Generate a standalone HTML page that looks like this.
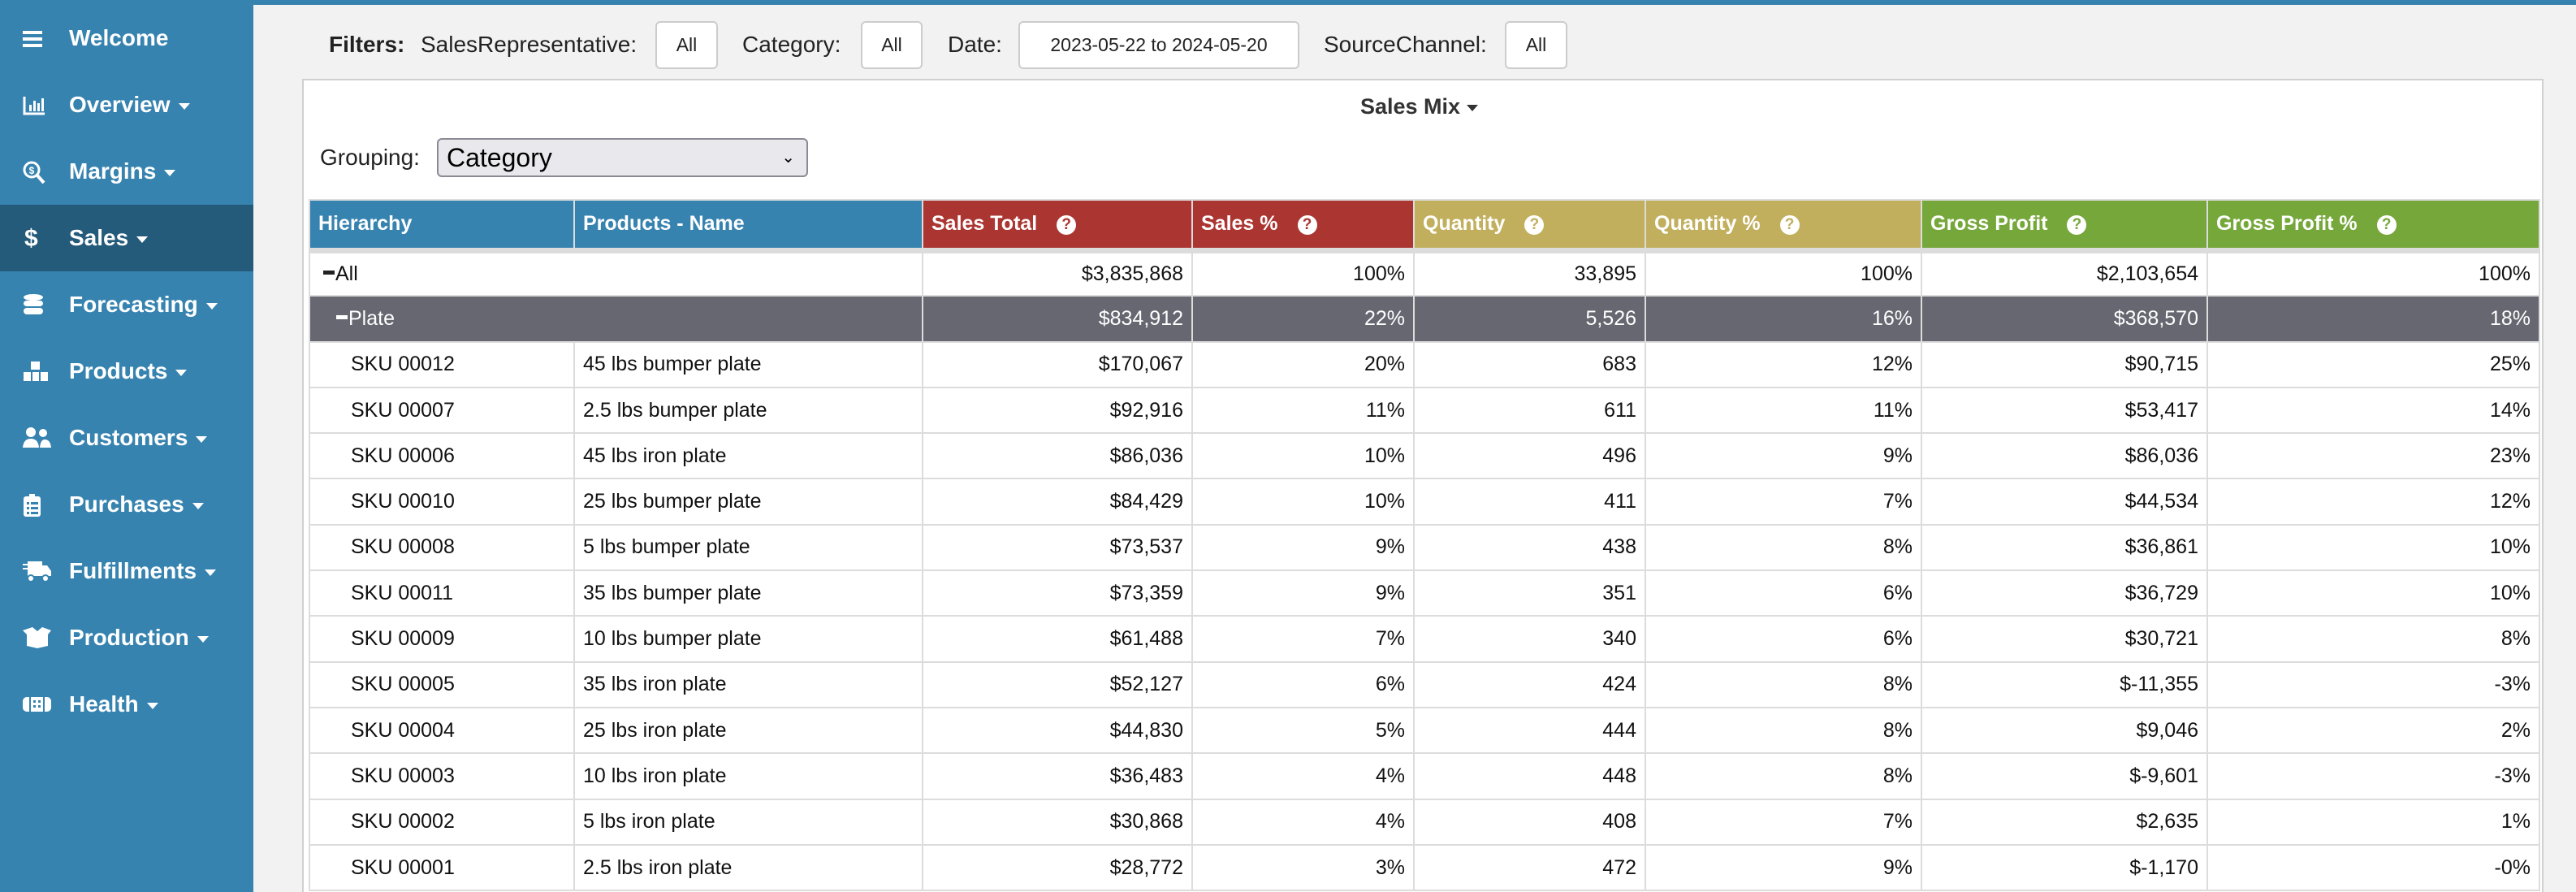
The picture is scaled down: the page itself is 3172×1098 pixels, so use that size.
<!DOCTYPE html>
<html style="width:3172px;height:1098px;overflow:hidden"><head><meta charset="utf-8">
<style>
*{box-sizing:border-box;margin:0;padding:0}
body{width:3172px;height:1098px;overflow:hidden;background:#f2f2f2;font-family:"Liberation Sans",Arial,sans-serif;position:relative}
#side{position:absolute;left:0;top:0;width:312px;height:1098px;background:#3783b0}
.nav{position:absolute;left:0;width:312px;height:82px;color:#fff;font-weight:bold;font-size:28px;line-height:82px;padding-left:85px}
.nav.act{background:#245b7a}
.nav svg{position:absolute;left:28px;top:27px}
.caret{display:inline-block;width:0;height:0;border-left:7px solid transparent;border-right:7px solid transparent;border-top:8px solid #fff;margin-left:10px;vertical-align:middle}
#topline{position:absolute;left:312px;top:0;right:0;height:6px;background:#3783b0}
.flt{position:absolute;top:55px;transform:translateY(-50%);font-size:28px;color:#222}
.btn{position:absolute;top:26px;height:59px;background:#fff;border:2px solid #ccc;border-radius:6px;font-size:23px;color:#222;text-align:center;line-height:55px}
#panel{position:absolute;left:372px;top:97px;width:2760px;height:1001px;background:#fff;border:2px solid #d0d0d0;border-bottom:none}
#title{position:absolute;left:1675px;top:116px;font-size:27px;font-weight:bold;color:#333}
#grp{position:absolute;left:394px;top:178px;font-size:28px;color:#222}
#sel{position:absolute;left:538px;top:170px;width:457px;height:48px;background:#e9e9ed;border:2px solid #8a8a95;border-radius:6px;font-size:32px;line-height:44px;padding-left:10px;color:#000}
#sel span{position:absolute;right:14px;top:0;font-size:20px}
table{position:absolute;left:380px;top:245px;border-collapse:collapse;table-layout:fixed;width:2746px;font-size:25px;color:#111}
td,th{border:2px solid #dcdcdc;height:56.3px;padding:0 10px;white-space:nowrap;overflow:hidden}
th{color:#fff;text-align:left;font-weight:bold;border-bottom:7px solid #dcdcdc;height:62px}
td{text-align:right}
td.l{text-align:left}
tr.p td{background:#676772;color:#fff}
.b{background:#3783b0}.r{background:#ab3531}.g{background:#c1af5d}.gr{background:#76a73a}
.q{display:inline-block;width:24px;height:24px;border-radius:50%;background:#fff;font-size:19px;line-height:24px;text-align:center;margin-left:24px;vertical-align:1px;font-weight:bold}
.r .q{color:#ab3531}.g .q{color:#c1af5d}.gr .q{color:#76a73a}
.m{display:inline-block;width:14px;height:5px;background:#222;vertical-align:7px;margin-right:1px}
tr.p .m{background:#fff}
</style></head><body>
<div id="side">
<div class="nav" style="top:6px"><svg width="26" height="28" viewBox="0 0 26 28"><rect x="0" y="5" width="24" height="4" fill="#fff"/><rect x="0" y="13" width="24" height="4" fill="#fff"/><rect x="0" y="21" width="24" height="4" fill="#fff"/></svg>Welcome</div>
<div class="nav" style="top:88px"><svg width="28" height="28" viewBox="0 0 28 28"><path d="M2 4V25H27" stroke="#fff" stroke-width="3" fill="none"/><rect x="8" y="14" width="3" height="8" fill="#fff"/><rect x="13" y="9" width="3" height="13" fill="#fff"/><rect x="18" y="12" width="3" height="10" fill="#fff"/><rect x="23" y="6" width="3" height="16" fill="#fff"/></svg>Overview<span class="caret"></span></div>
<div class="nav" style="top:170px"><svg width="28" height="30" viewBox="0 0 28 30"><circle cx="11" cy="12" r="9" stroke="#fff" stroke-width="3" fill="none"/><path d="M18 19L26 28" stroke="#fff" stroke-width="4"/><text x="11" y="17" font-size="12" fill="#fff" text-anchor="middle" font-family="Liberation Sans">$</text></svg>Margins<span class="caret"></span></div>
<div class="nav act" style="top:252px"><svg width="24" height="30" viewBox="0 0 24 30"><text x="2" y="24" font-size="30" font-weight="bold" fill="#fff" font-family="Liberation Sans">$</text></svg>Sales<span class="caret"></span></div>
<div class="nav" style="top:334px"><svg width="26" height="28" viewBox="0 0 26 28"><ellipse cx="13" cy="5" rx="12" ry="4" fill="#fff"/><rect x="1" y="9" width="24" height="7" rx="4" fill="#fff"/><rect x="1" y="18" width="24" height="8" rx="4" fill="#fff"/></svg>Forecasting<span class="caret"></span></div>
<div class="nav" style="top:416px"><svg width="32" height="28" viewBox="0 0 32 28"><rect x="10" y="2" width="11" height="10" fill="#fff"/><rect x="1" y="15" width="9" height="11" fill="#fff"/><rect x="12" y="15" width="8" height="11" fill="#fff"/><rect x="22" y="15" width="9" height="11" fill="#fff"/></svg>Products<span class="caret"></span></div>
<div class="nav" style="top:498px"><svg width="36" height="28" viewBox="0 0 36 28"><circle cx="10" cy="7" r="6" fill="#fff"/><circle cx="25" cy="8" r="5" fill="#fff"/><path d="M0 26Q1 15 10 15Q19 15 20 26Z" fill="#fff"/><path d="M21 26Q22 16 27 16Q34 16 35 26Z" fill="#fff"/></svg>Customers<span class="caret"></span></div>
<div class="nav" style="top:580px"><svg width="24" height="30" viewBox="0 0 24 30"><rect x="1" y="4" width="21" height="25" rx="3" fill="#fff"/><rect x="8" y="1" width="7" height="5" fill="#fff"/><g fill="#3783b0"><rect x="5" y="11" width="3" height="3"/><rect x="10" y="11" width="9" height="3"/><rect x="5" y="17" width="3" height="3"/><rect x="10" y="17" width="9" height="3"/><rect x="5" y="23" width="3" height="3"/><rect x="10" y="23" width="9" height="3"/></g></svg>Purchases<span class="caret"></span></div>
<div class="nav" style="top:662px"><svg width="36" height="28" viewBox="0 0 36 28"><rect x="6" y="2" width="18" height="18" fill="#fff"/><path d="M24 7H30L35 14V20H24Z" fill="#fff"/><rect x="0" y="5" width="10" height="2" fill="#fff"/><rect x="0" y="10" width="10" height="2" fill="#fff"/><circle cx="10" cy="23" r="4" fill="#fff" stroke="#3783b0" stroke-width="2"/><circle cx="28" cy="23" r="4" fill="#fff" stroke="#3783b0" stroke-width="2"/></svg>Fulfillments<span class="caret"></span></div>
<div class="nav" style="top:744px"><svg width="36" height="28" viewBox="0 0 36 28"><path d="M0 5L12 1L18 6L24 1L35 5L31 10V24L18 27L5 24V10Z" fill="#fff"/></svg>Production<span class="caret"></span></div>
<div class="nav" style="top:826px"><svg width="36" height="28" viewBox="0 0 36 28"><rect x="0" y="5" width="35" height="18" rx="5" fill="#fff"/><g fill="#3783b0"><rect x="8" y="5" width="2" height="18"/><rect x="25" y="5" width="2" height="18"/><rect x="13" y="9" width="3" height="3"/><rect x="19" y="9" width="3" height="3"/><rect x="13" y="15" width="3" height="3"/><rect x="19" y="15" width="3" height="3"/></g></svg>Health<span class="caret"></span></div>
</div>
<div id="topline"></div>
<div class="flt" style="left:405px;font-weight:bold">Filters:</div>
<div class="flt" style="left:518px">SalesRepresentative:</div>
<div class="btn" style="left:807px;width:77px">All</div>
<div class="flt" style="left:914px">Category:</div>
<div class="btn" style="left:1060px;width:76px">All</div>
<div class="flt" style="left:1167px">Date:</div>
<div class="btn" style="left:1254px;width:346px">2023-05-22 to 2024-05-20</div>
<div class="flt" style="left:1630px">SourceChannel:</div>
<div class="btn" style="left:1853px;width:77px">All</div>
<div id="panel"></div>
<div id="title">Sales Mix<span class="caret" style="border-top-color:#333;margin-left:8px"></span></div>
<div id="grp">Grouping:</div>
<div id="sel">Category<span>&#8964;</span></div>
<table>
<colgroup><col style="width:326px"><col style="width:429px"><col style="width:332px"><col style="width:273px"><col style="width:285px"><col style="width:340px"><col style="width:352px"><col style="width:409px"></colgroup>
<tr><th class="b">Hierarchy</th><th class="b">Products - Name</th><th class="r">Sales Total<span class="q">?</span></th><th class="r">Sales %<span class="q">?</span></th><th class="g">Quantity<span class="q">?</span></th><th class="g">Quantity %<span class="q">?</span></th><th class="gr">Gross Profit<span class="q">?</span></th><th class="gr">Gross Profit %<span class="q">?</span></th></tr>
<tr><td class="l" colspan="2" style="padding-left:16px"><span class="m"></span>All</td><td>$3,835,868</td><td>100%</td><td>33,895</td><td>100%</td><td>$2,103,654</td><td>100%</td></tr>
<tr class="p"><td class="l" colspan="2" style="padding-left:32px"><span class="m"></span>Plate</td><td>$834,912</td><td>22%</td><td>5,526</td><td>16%</td><td>$368,570</td><td>18%</td></tr>
<tr><td class="l" style="padding-left:50px">SKU 00012</td><td class="l">45 lbs bumper plate</td><td>$170,067</td><td>20%</td><td>683</td><td>12%</td><td>$90,715</td><td>25%</td></tr>
<tr><td class="l" style="padding-left:50px">SKU 00007</td><td class="l">2.5 lbs bumper plate</td><td>$92,916</td><td>11%</td><td>611</td><td>11%</td><td>$53,417</td><td>14%</td></tr>
<tr><td class="l" style="padding-left:50px">SKU 00006</td><td class="l">45 lbs iron plate</td><td>$86,036</td><td>10%</td><td>496</td><td>9%</td><td>$86,036</td><td>23%</td></tr>
<tr><td class="l" style="padding-left:50px">SKU 00010</td><td class="l">25 lbs bumper plate</td><td>$84,429</td><td>10%</td><td>411</td><td>7%</td><td>$44,534</td><td>12%</td></tr>
<tr><td class="l" style="padding-left:50px">SKU 00008</td><td class="l">5 lbs bumper plate</td><td>$73,537</td><td>9%</td><td>438</td><td>8%</td><td>$36,861</td><td>10%</td></tr>
<tr><td class="l" style="padding-left:50px">SKU 00011</td><td class="l">35 lbs bumper plate</td><td>$73,359</td><td>9%</td><td>351</td><td>6%</td><td>$36,729</td><td>10%</td></tr>
<tr><td class="l" style="padding-left:50px">SKU 00009</td><td class="l">10 lbs bumper plate</td><td>$61,488</td><td>7%</td><td>340</td><td>6%</td><td>$30,721</td><td>8%</td></tr>
<tr><td class="l" style="padding-left:50px">SKU 00005</td><td class="l">35 lbs iron plate</td><td>$52,127</td><td>6%</td><td>424</td><td>8%</td><td>$-11,355</td><td>-3%</td></tr>
<tr><td class="l" style="padding-left:50px">SKU 00004</td><td class="l">25 lbs iron plate</td><td>$44,830</td><td>5%</td><td>444</td><td>8%</td><td>$9,046</td><td>2%</td></tr>
<tr><td class="l" style="padding-left:50px">SKU 00003</td><td class="l">10 lbs iron plate</td><td>$36,483</td><td>4%</td><td>448</td><td>8%</td><td>$-9,601</td><td>-3%</td></tr>
<tr><td class="l" style="padding-left:50px">SKU 00002</td><td class="l">5 lbs iron plate</td><td>$30,868</td><td>4%</td><td>408</td><td>7%</td><td>$2,635</td><td>1%</td></tr>
<tr><td class="l" style="padding-left:50px">SKU 00001</td><td class="l">2.5 lbs iron plate</td><td>$28,772</td><td>3%</td><td>472</td><td>9%</td><td>$-1,170</td><td>-0%</td></tr>
</table>
</body></html>
